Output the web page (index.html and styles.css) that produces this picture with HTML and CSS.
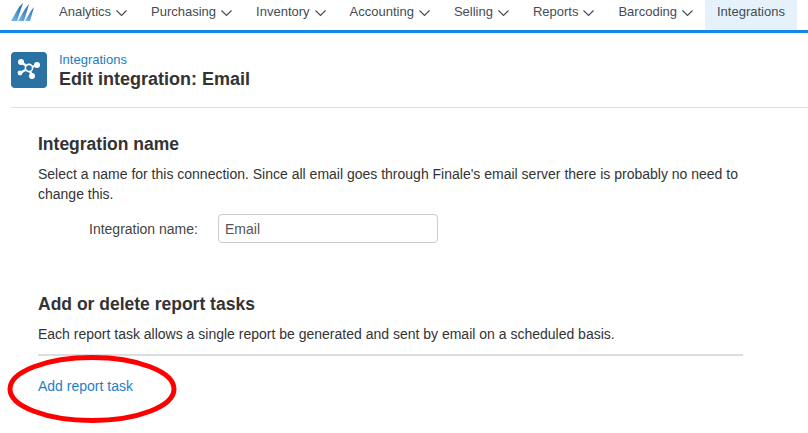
FILE: index.html
```html
<!DOCTYPE html>
<html lang="en">
<head>
    <meta charset="UTF-8">
    <title>Edit integration: Email</title>
    <link rel="stylesheet" href="styles.css">
</head>
<body>

    <nav class="topNav">
        <div class="logo">
            <svg width="36" height="24" viewBox="0 0 36 24">
                <defs>
                    <linearGradient id="logoFill" x1="0" y1="1" x2="1" y2="0">
                        <stop offset="0" stop-color="#7dbdec"/>
                        <stop offset="1" stop-color="#1c62a6"/>
                    </linearGradient>
                </defs>
                <polygon points="1,18 7,18 13,0 9,4" fill="url(#logoFill)"/>
                <polygon points="8,18 14,18 19,1 15,6" fill="url(#logoFill)"/>
                <polygon points="15,18 20,18 24,4 21,8" fill="url(#logoFill)"/>
            </svg>
        </div>
        <a class="navItem">Analytics <svg class="chev" width="11" height="7" viewBox="0 0 11 7"><path d="M0.5 0.5 L5.5 5.5 L10.5 0.5"/></svg></a>
        <a class="navItem">Purchasing <svg class="chev" width="11" height="7" viewBox="0 0 11 7"><path d="M0.5 0.5 L5.5 5.5 L10.5 0.5"/></svg></a>
        <a class="navItem">Inventory <svg class="chev" width="11" height="7" viewBox="0 0 11 7"><path d="M0.5 0.5 L5.5 5.5 L10.5 0.5"/></svg></a>
        <a class="navItem">Accounting <svg class="chev" width="11" height="7" viewBox="0 0 11 7"><path d="M0.5 0.5 L5.5 5.5 L10.5 0.5"/></svg></a>
        <a class="navItem">Selling <svg class="chev" width="11" height="7" viewBox="0 0 11 7"><path d="M0.5 0.5 L5.5 5.5 L10.5 0.5"/></svg></a>
        <a class="navItem">Reports <svg class="chev" width="11" height="7" viewBox="0 0 11 7"><path d="M0.5 0.5 L5.5 5.5 L10.5 0.5"/></svg></a>
        <a class="navItem">Barcoding <svg class="chev" width="11" height="7" viewBox="0 0 11 7"><path d="M0.5 0.5 L5.5 5.5 L10.5 0.5"/></svg></a>
        <a class="navItem active">Integrations</a>
    </nav>

    <header class="pageHead">
        <div class="headIcon">
            <svg width="36" height="36" viewBox="0 0 36 36">
                <g stroke="#fff" stroke-width="2.4" fill="none">
                    <path d="M10 10 L18 16 L26 13 M18 16 L21 24 M18 16 L9 21"/>
                </g>
                <circle cx="18" cy="16" r="3.6" fill="#2a72a3" stroke="#fff" stroke-width="1.6"/>
                <g fill="#fff">
                    <circle cx="10" cy="10" r="3"/>
                    <circle cx="26" cy="13" r="3"/>
                    <circle cx="21" cy="24" r="3"/>
                    <circle cx="9" cy="21" r="2.4"/>
                </g>
            </svg>
        </div>
        <div>
            <a class="crumb">Integrations</a>
            <h1>Edit integration: Email</h1>
        </div>
    </header>

    <main class="content">
        <section class="nameSection">
            <h2>Integration name</h2>
            <p>Select a name for this connection. Since all email goes through Finale's email server there is probably no need to change this.</p>
            <div class="formRow">
                <label for="nameInput">Integration name:</label>
                <input id="nameInput" type="text" value="Email">
            </div>
        </section>

        <section class="taskSection">
            <h2>Add or delete report tasks</h2>
            <p>Each report task allows a single report be generated and sent by email on a scheduled basis.</p>
            <div class="taskList">
                <a class="addLink">Add report task</a>
            </div>
        </section>
    </main>

    <!-- hand drawn circle on top of the screenshot -->
    <svg class="redCircle" width="180" height="90" viewBox="0 0 180 90">
        <ellipse cx="92" cy="47" rx="82" ry="31.5" fill="none" stroke="#f00" stroke-width="5"/>
    </svg>

</body>
</html>
```

FILE: styles.css
```css
html, body {
    height: 100%;
}

body {
    font-family: 'Liberation Sans', Arial, sans-serif;
    background-color: #ffffff;
    color: #333333;
    margin: 0;
    padding: 0;
    font-size: 14px;
    position: relative;
    overflow: hidden;
}

.topNav {
    display: flex;
    height: 30px;
    border-bottom: 3px solid #1488e8;
}

.logo {
    flex-shrink: 0;
    width: 47px;
    padding-left: 10px;
    padding-top: 3px;
    box-sizing: border-box;
    height: 30px;
    overflow: hidden;
}

.navItem {
    display: flex;
    align-items: center;
    gap: 5px;
    padding: 0 12px;
    color: #444c57;
    font-size: 13px;
    line-height: 24px;
    padding-bottom: 6px;
    height: 24px;
}

.navItem.active {
    background: #e5f1fb;
}

.chev {
    fill: none;
    stroke: #444c57;
    stroke-width: 1.2;
    margin-top: 2px;
}

.pageHead {
    display: flex;
    align-items: center;
    gap: 12px;
    margin-left: 11px;
    height: 75px;
    box-sizing: border-box;
    border-bottom: 1px solid #dddddd;
}

.headIcon {
    width: 36px;
    height: 36px;
    background: #2a72a3;
    border-radius: 4px;
}

.crumb {
    display: block;
    color: #1a7bc9;
    font-size: 13px;
    line-height: 17px;
}

h1 {
    margin: 0;
    font-size: 18px;
    line-height: 22px;
    font-weight: bold;
    color: #333333;
}

.content {
    padding: 0 38px;
}

h2 {
    margin: 0;
    font-size: 17.5px;
    line-height: 22px;
    font-weight: bold;
    color: #333333;
}

p {
    margin: 9px 0 0 0;
    width: 705px;
    line-height: 20px;
    color: #333333;
}

.nameSection {
    padding-top: 25px;
}

.formRow {
    display: flex;
    align-items: center;
    margin-top: 10px;
    padding-left: 51px;
}

.formRow label {
    width: 129px;
    color: #444444;
}

.formRow input {
    width: 220px;
    height: 29px;
    box-sizing: border-box;
    border: 1px solid #cccccc;
    border-radius: 4px;
    padding: 0 6px;
    font-family: inherit;
    font-size: 14px;
    color: #555555;
}

.taskSection {
    padding-top: 50px;
}

.taskList {
    width: 705px;
    margin-top: 10px;
    border-top: 2px solid #dddddd;
    padding-top: 22px;
}

.addLink {
    color: #1f80c6;
    line-height: 16px;
    display: block;
}

.redCircle {
    position: absolute;
    left: 0;
    top: 342px;
}
```
